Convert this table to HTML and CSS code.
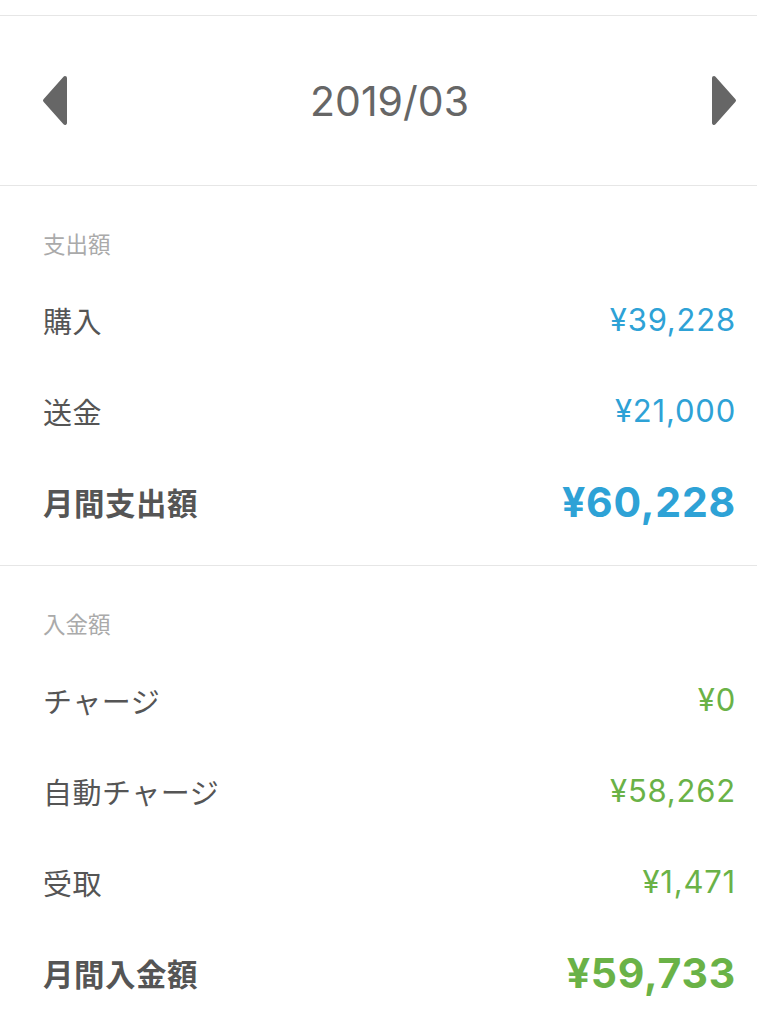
FILE: index.html
```html
<!DOCTYPE html>
<html lang="ja">
<head>
<meta charset="utf-8">
<link rel="stylesheet" href="styles.css">
</head>
<body>
<div class="topgap"></div>
<header class="month-bar">
  <button class="nav prev" aria-label="前月">
    <svg width="26" height="51" viewBox="0 0 26 51"><path d="M23 3 L3 25.5 L23 48 Z" fill="#666" stroke="#666" stroke-width="4" stroke-linejoin="round"/></svg>
  </button>
  <div class="month">2019/03</div>
  <button class="nav next" aria-label="翌月">
    <svg width="26" height="51" viewBox="0 0 26 51"><path d="M3 3 L23 25.5 L3 48 Z" fill="#666" stroke="#666" stroke-width="4" stroke-linejoin="round"/></svg>
  </button>
</header>
<section class="block spend">
  <div class="block-title">支出額</div>
  <div class="row"><span class="label">購入</span><span class="amount">¥39,228</span></div>
  <div class="row"><span class="label">送金</span><span class="amount">¥21,000</span></div>
  <div class="row total"><span class="label">月間支出額</span><span class="amount">¥60,228</span></div>
</section>
<section class="block income">
  <div class="block-title">入金額</div>
  <div class="row"><span class="label">チャージ</span><span class="amount">¥0</span></div>
  <div class="row"><span class="label">自動チャージ</span><span class="amount">¥58,262</span></div>
  <div class="row"><span class="label">受取</span><span class="amount">¥1,471</span></div>
  <div class="row total"><span class="label">月間入金額</span><span class="amount">¥59,733</span></div>
</section>
</body>
</html>
```
FILE: styles.css
```css
html, body {
  margin: 0;
  padding: 0;
  background: #fff;
}
body {
  font-family: "Noto Sans CJK JP", "Noto Sans", sans-serif;
  color: #555;
  width: 757px;
  overflow: hidden;
}
.topgap {
  height: 15px;
  border-bottom: 1px solid #e6e6e6;
}
.month-bar {
  height: 169px;
  border-bottom: 1px solid #e6e6e6;
  display: flex;
  align-items: center;
  justify-content: space-between;
  padding: 0 20px 0 42px;
}
.nav {
  border: 0;
  background: none;
  padding: 0;
  width: 26px;
  height: 51px;
  display: flex;
}
.month {
  font-family: Inter, "Liberation Sans", sans-serif;
  font-size: 41px;
  letter-spacing: 0;
  color: #666;
}
.block {
  padding: 42px 21px 18px 43px;
  border-bottom: 1px solid #e6e6e6;
}
.income {
  border-bottom: 0;
}
.block-title {
  font-size: 22.5px;
  line-height: 30px;
  color: #aaa;
  margin-bottom: 16px;
}
.row {
  height: 91px;
  display: flex;
  align-items: center;
  justify-content: space-between;
}
.label {
  font-size: 29px;
  color: #555;
  letter-spacing: 0.5px;
}
.amount {
  font-family: Inter, "Liberation Sans", sans-serif;
  font-size: 31px;
  letter-spacing: 0.8px;
}
.total .label {
  font-weight: 700;
  font-size: 30.5px;
  color: #555;
}
.total .amount {
  font-size: 41px;
  font-weight: 700;
  letter-spacing: 0.8px;
}
.spend .amount { color: #2ea2d6; }
.income .amount { color: #6ab247; }
```
